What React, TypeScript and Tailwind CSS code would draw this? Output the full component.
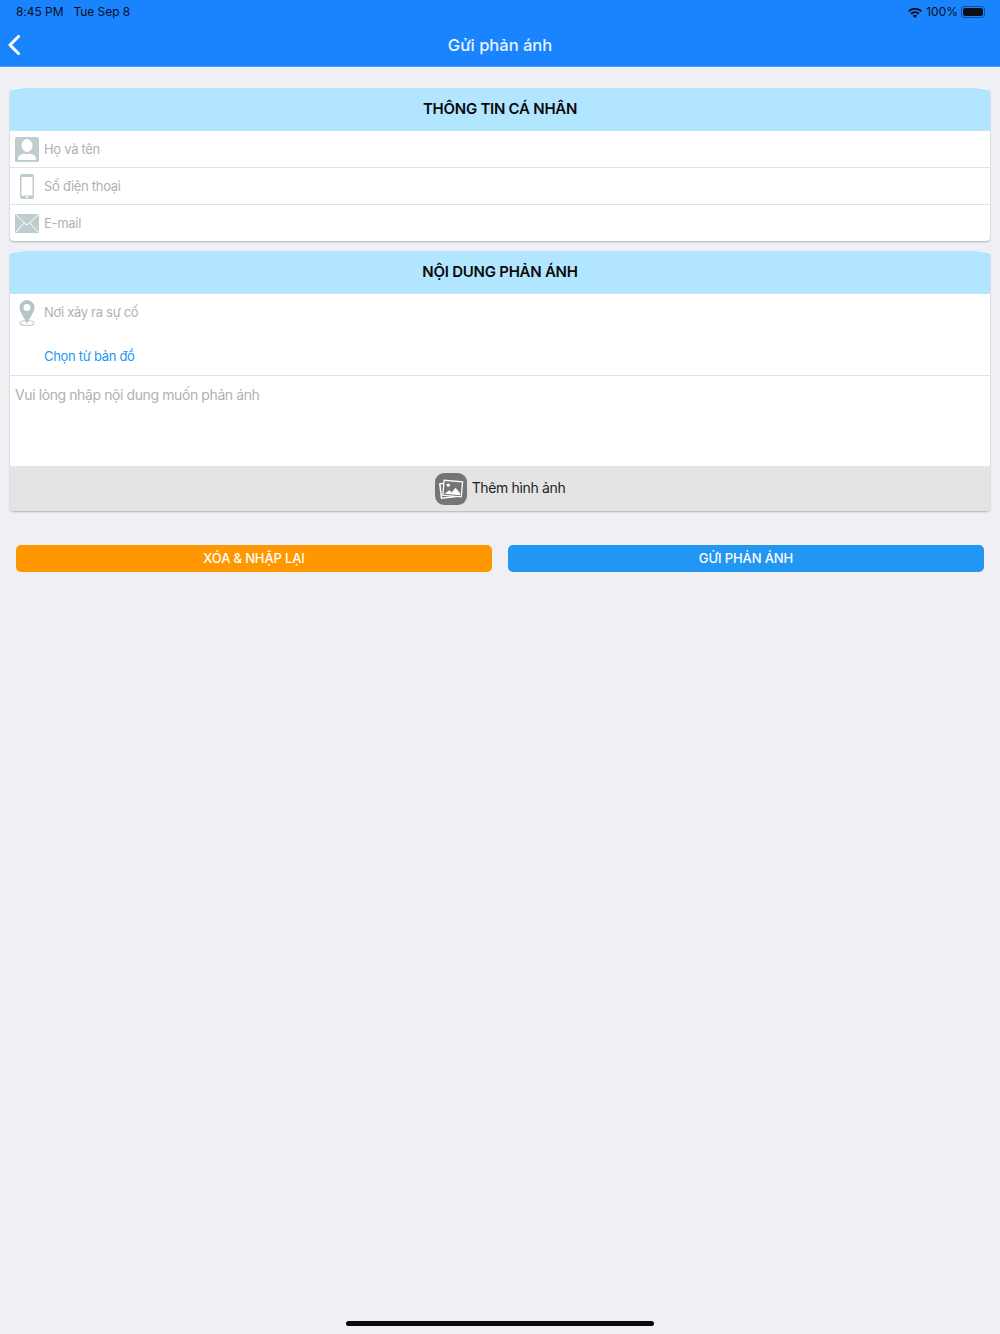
const PersonIcon = () => (
  <svg width="24" height="25" viewBox="0 0 24 25">
    <rect width="24" height="25" rx="1.5" fill="#c0cdcf" />
    <ellipse cx="12" cy="8.500" rx="5.500" ry="6.500" fill="#fff" />
    <path d="M3 23v-1.500c0-3 3.500-4 6-5 1 1 5 1 6 0 2.500 1 6 2 6 5V23z" fill="#fff" />
  </svg>
);

const PhoneIcon = () => (
  <svg width="14" height="25" viewBox="0 0 14 25">
    <rect width="14" height="25" rx="2" fill="#c0cdcf" />
    <rect x="1.500" y="3" width="11" height="18.500" fill="#fff" />
    <circle cx="7" cy="23.200" r="1" fill="#fff" />
  </svg>
);

const MailIcon = () => (
  <svg width="24" height="19" viewBox="0 0 24 19">
    <rect width="24" height="19" rx="1" fill="#c0cdcf" />
    <path d="M1 1l11 10L23 1M1 18l8-9M23 18l-8-9" fill="none" stroke="#fff" strokeWidth="1" />
  </svg>
);

const PinIcon = () => (
  <svg width="16" height="26" viewBox="0 0 16 26">
    <ellipse cx="8" cy="23" rx="7" ry="2.500" fill="none" stroke="#c0cdcf" strokeWidth="1.200" />
    <path d="M8 0a7.500 7.500 0 0 1 7.500 7.500C15.500 12 11 17 8 24 5 17 .5 12 .5 7.500A7.500 7.500 0 0 1 8 0z" fill="#b5c4c6" />
    <circle cx="8" cy="7.500" r="3.500" fill="#fff" />
  </svg>
);

const PhotosIcon = () => (
  <svg width="32" height="32" viewBox="0 0 32 32">
    <rect width="32" height="32" rx="9" fill="#757575" />
    <g transform="rotate(-7 16 16)">
      <rect x="5.500" y="9.500" width="18" height="14.500" fill="none" stroke="#fff" strokeWidth="1.500" />
    </g>
    <g transform="rotate(5 17 15)">
      <rect x="8.500" y="8" width="18.500" height="15" fill="#757575" stroke="#fff" strokeWidth="1.300" />
      <circle cx="13" cy="12.500" r="1.700" fill="#fff" />
      <path d="M10 21.500l4.500-4 2.500 2 3.500-5 5 5v2z" fill="#fff" />
    </g>
  </svg>
);

const WifiIcon = () => (
  <svg width="14" height="11" viewBox="0 0 14 11">
    <path d="M7 11L4.800 8.700a3.200 3.200 0 0 1 4.400 0z" fill="#0b0f1a" />
    <path d="M3.700 7.500L2.400 6.100a6.700 6.700 0 0 1 9.200 0l-1.300 1.400a4.800 4.800 0 0 0-6.600 0z" fill="#0b0f1a" />
    <path d="M1.300 5L0 3.600a10.200 10.200 0 0 1 14 0L12.700 5a8.300 8.300 0 0 0-11.400 0z" fill="#0b0f1a" />
  </svg>
);

const Corner = ({ side }: { side: 'left' | 'right' }) => (
  <svg
    width="16"
    height="3"
    viewBox="0 0 16 3"
    className={`absolute top-0 ${side === 'left' ? 'left-0' : 'right-0 -scale-x-100'}`}
  >
    <path d="M0 3C1 1.500 7 1 16 0H0z" fill="#f4f8fb" />
  </svg>
);

const SectionHeader = ({ title }: { title: string }) => (
  <div className="relative h-[43px] bg-[#b2e5ff] border-b border-[#c4e4f2] flex items-center justify-center">
    <Corner side="left" />
    <Corner side="right" />
    <span className="text-[15px] font-semibold text-[#0a0a0a] tracking-[-0.25px]">{title}</span>
  </div>
);

const InfoRow = ({ icon, label, last }: { icon: React.ReactNode; label: string; last?: boolean }) => (
  <div className={`flex items-center ${last ? 'h-[36px]' : 'h-[37px] border-b border-[#e2e2e2]'}`}>
    <div className="w-[34px] px-[5px] flex justify-center shrink-0">{icon}</div>
    <span className="pt-[1px] text-[13px] tracking-[-0.3px] text-[#b1b1b1]">{label}</span>
  </div>
);

const App = () => {
  return (
    <div className="min-h-[1334px] bg-[#efeff4] flex flex-col font-['Inter','Noto_Sans',sans-serif] relative">
      {/* Status bar + nav */}
      <div className="h-[67px] bg-[#1a84ff] border-b border-[#4d9fff] shrink-0">
        <div className="h-[24px] pl-[16px] pr-[15px] flex items-center justify-between text-[12px] text-[#0b0f1a]">
          <div className="flex gap-[10px] tracking-[-0.05px]">
            <span>8:45 PM</span>
            <span>Tue Sep 8</span>
          </div>
          <div className="flex items-center gap-[4px]">
            <WifiIcon />
            <span>100%</span>
            <div className="w-[24px] h-[12px] rounded-[3px] border border-[#0f4f9a] p-[1px] ml-[-1px]">
              <div className="w-full h-full bg-[#0b0f1a] rounded-[2px]" />
            </div>
          </div>
        </div>
        <div className="relative h-[42px] flex items-center justify-center">
          <svg width="14" height="20" viewBox="0 0 14 20" className="absolute left-[7px] top-[11px]">
            <path d="M11.500 1.500L3 10l8.500 8.500" fill="none" stroke="#fff" strokeWidth="3" strokeLinecap="round" strokeLinejoin="round" />
          </svg>
          <span className="text-[16.500px] font-medium text-[#e9f3ff]">Gửi phản ánh</span>
        </div>
      </div>

      <div className="px-[10px] pt-[21px]">
        {/* Personal info */}
        <div className="bg-white rounded-[4px] overflow-hidden shadow-[0_1px_2px_rgba(0,0,0,0.25)]">
          <SectionHeader title="THÔNG TIN CÁ NHÂN" />
          <InfoRow icon={<PersonIcon />} label="Họ và tên" />
          <InfoRow icon={<PhoneIcon />} label="Số điện thoại" />
          <InfoRow icon={<MailIcon />} label="E-mail" last />
        </div>

        {/* Feedback content */}
        <div className="mt-[10px] bg-white rounded-[4px] overflow-hidden shadow-[0_1px_2px_rgba(0,0,0,0.25)]">
          <SectionHeader title="NỘI DUNG PHẢN ÁNH" />
          <div className="h-[82px] border-b border-[#e2e2e2] flex flex-col">
            <div className="h-[37px] flex items-center shrink-0">
              <div className="w-[34px] flex justify-center shrink-0">
                <PinIcon />
              </div>
              <span className="text-[13px] tracking-[-0.3px] text-[#b1b1b1]">Nơi xảy ra sự cố</span>
            </div>
            <span className="pl-[34px] mt-[16px] text-[13px] tracking-[-0.3px] leading-[18px] text-[#2196f3]">
              Chọn từ bản đồ
            </span>
          </div>
          <div className="h-[90px] px-[5px] pt-[10px] text-[14px] tracking-[-0.4px] leading-[18px] text-[#b1b1b1]">
            Vui lòng nhập nội dung muốn phản ánh
          </div>
          <div className="h-[45px] bg-[#e4e4e4] flex items-center justify-center gap-[5px]">
            <PhotosIcon />
            <span className="text-[14px] tracking-[-0.35px] text-[#1f1f1f] mb-[2px]">Thêm hình ảnh</span>
          </div>
        </div>

        {/* Actions */}
        <div className="mt-[34px] px-[6px] grid grid-cols-2 gap-[16px]">
          <button className="h-[27px] rounded-[5px] bg-[#ff9800] text-white text-[13px] font-medium tracking-[-0.15px]">
            XÓA &amp; NHẬP LẠI
          </button>
          <button className="h-[27px] rounded-[5px] bg-[#2196f3] text-white text-[13px] font-medium tracking-[-0.1px]">
            GỬI PHẢN ÁNH
          </button>
        </div>
      </div>

      {/* Home indicator */}
      <div className="absolute bottom-[8px] left-[346px] w-[308px] h-[5px] rounded-full bg-[#0a0a0a]" />
    </div>
  );
};

export default App;
